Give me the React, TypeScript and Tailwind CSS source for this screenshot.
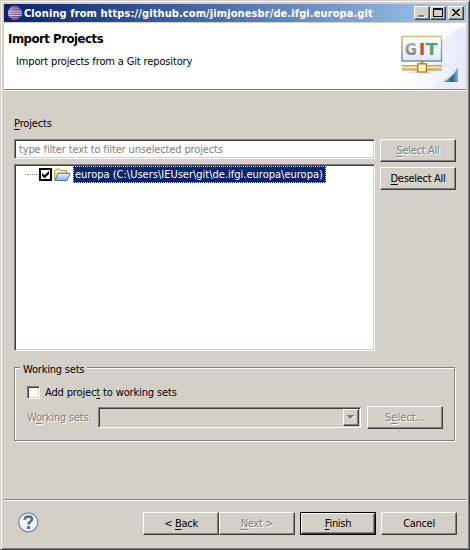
import React from "react";

const face = "bg-[#d4d0c8]";
const sunken =
  "border border-t-[#808080] border-l-[#808080] border-b-white border-r-white shadow-[inset_1px_1px_0_#404040,inset_-1px_-1px_0_#d4d0c8]";
const raised =
  "border border-t-white border-l-white border-b-[#404040] border-r-[#404040] shadow-[inset_-1px_-1px_0_#808080]";

function U({ children }: { children: React.ReactNode }) {
  return <span className="underline decoration-1 underline-offset-2">{children}</span>;
}

function Button({
  children,
  disabled,
  primary,
}: {
  children: React.ReactNode;
  disabled?: boolean;
  primary?: boolean;
}) {
  const tone = disabled ? "text-[#808080] [text-shadow:1px_1px_0_#fff]" : "text-black";
  return (
    <div className={`h-[23px] w-[76px] shrink-0 ${primary ? "border border-black" : ""}`}>
      <button className={`flex h-full w-full items-center justify-center pt-px tracking-[-0.3px] ${face} ${raised} ${tone}`}>
        <span>{children}</span>
      </button>
    </div>
  );
}

function CaptionButton({ children }: { children: React.ReactNode }) {
  return (
    <button className={`h-[14px] w-4 ${face} ${raised}`}>
      <svg width="14" height="12" viewBox="0 0 14 12" className="block" shapeRendering="crispEdges">
        {children}
      </svg>
    </button>
  );
}

function EclipseIcon() {
  return (
    <svg width="16" height="16" viewBox="0 0 16 16" className="shrink-0">
      <defs>
        <linearGradient id="globe" x1="0" y1="0" x2="1" y2="0.3">
          <stop offset="0" stopColor="#c7a3c4" />
          <stop offset="0.4" stopColor="#8c6ba6" />
          <stop offset="1" stopColor="#5c4488" />
        </linearGradient>
      </defs>
      <circle cx="8" cy="8" r="7.2" fill="url(#globe)" />
      <path d="M1.5 6.1H14.6M1 8.3H15M1.5 10.5H14.6" stroke="#dccbe6" strokeWidth="1" />
      <path d="M4 3.5H12M4.5 12.6H11.5" stroke="#b59cc9" strokeWidth=".6" />
    </svg>
  );
}

function HeaderArt() {
  return (
    <svg width="75" height="66" viewBox="391 23 75 66" className="shrink-0">
      <defs>
        <linearGradient id="swoosh" x1="391" y1="80" x2="466" y2="60" gradientUnits="userSpaceOnUse">
          <stop offset="0" stopColor="#fff" />
          <stop offset="0.5" stopColor="#f5f7fd" />
          <stop offset="1" stopColor="#e6ecfa" />
        </linearGradient>
        <linearGradient id="board" x1="0" y1="0" x2="0" y2="1">
          <stop offset="0" stopColor="#fff" />
          <stop offset="1" stopColor="#dcebf7" />
        </linearGradient>
        <linearGradient id="frame" x1="0" y1="0" x2="0" y2="1">
          <stop offset="0" stopColor="#d4b784" />
          <stop offset="1" stopColor="#5f8aa4" />
        </linearGradient>
        <linearGradient id="pipe" x1="0" y1="0" x2="0" y2="1">
          <stop offset="0" stopColor="#a8862f" />
          <stop offset="0.35" stopColor="#fff2a8" />
          <stop offset="1" stopColor="#b8973f" />
        </linearGradient>
        <linearGradient id="corner" x1="0" y1="0" x2="1" y2="0">
          <stop offset="0" stopColor="#8fb0d4" />
          <stop offset="0.6" stopColor="#2d5c99" />
          <stop offset="1" stopColor="#8eaed2" />
        </linearGradient>
        <linearGradient id="letterG" x1="0" y1="0" x2="0" y2="1">
          <stop offset="0" stopColor="#b0b0b0" />
          <stop offset="1" stopColor="#777" />
        </linearGradient>
        <linearGradient id="shade" x1="0" y1="0" x2="1" y2="0">
          <stop offset="0" stopColor="#c8c8d4" />
          <stop offset="1" stopColor="#eef2fb" />
        </linearGradient>
      </defs>
      <path d="M391 89C410 84 421 70 432 54C443 38 452 30 466 26V89Z" fill="url(#swoosh)" />
      <path d="M425 89C443 80 456 66 466 46V89Z" fill="#dfe7f8" opacity=".35" />
      <path d="M407 73L443 62L458 63L430 74Z" fill="url(#shade)" opacity=".6" />
      <rect x="402" y="36.5" width="39.5" height="24.5" fill="url(#board)" stroke="url(#frame)" strokeWidth="1.4" />
      <g fontFamily="'DejaVu Sans', sans-serif" fontWeight="bold" fontSize="16">
        <text x="404.7" y="55.3" fill="url(#letterG)" textLength="12" lengthAdjust="spacingAndGlyphs">G</text>
        <text x="418.8" y="55.3" fill="#b95350" textLength="6.5" lengthAdjust="spacingAndGlyphs">I</text>
        <text x="425.5" y="55.3" fill="#55a46a" textLength="12" lengthAdjust="spacingAndGlyphs">T</text>
      </g>
      <rect x="420.5" y="61" width="3" height="4" fill="#b28f36" />
      <rect x="402" y="65" width="40" height="5.5" fill="url(#pipe)" />
      <rect x="417.8" y="63.8" width="8.6" height="8.2" fill="#fff3c4" stroke="#a67e2a" strokeWidth="1.3" />
      <path d="M458 67V82H443C449 79 454 74 458 67Z" fill="url(#corner)" />
      <path d="M457.5 68C454 74 450 78.5 443.5 81.5" stroke="#b3c9df" fill="none" />
    </svg>
  );
}

function FolderIcon() {
  return (
    <svg width="17" height="14" viewBox="0 0 17 14" className="shrink-0">
      <defs>
        <linearGradient id="front" x1="0" y1="0" x2="0" y2="1">
          <stop offset="0" stopColor="#eaf4ff" />
          <stop offset="1" stopColor="#82b2e6" />
        </linearGradient>
      </defs>
      <path d="M.7 11.5V2.6L2 1.2H6L7.2 2.6H12.8V6" fill="#fbe7a2" stroke="#c7923f" />
      <path d="M3.9 5.3H16.2L13 12.5H.9Z" fill="url(#front)" stroke="#4879b5" strokeLinejoin="round" />
    </svg>
  );
}

export default function App() {
  return (
    <div
      className={`flex h-[550px] w-[470px] flex-col overflow-hidden ${face} border border-t-[#d4d0c8] border-l-[#d4d0c8] border-b-[#404040] border-r-[#404040] p-[3px] pb-0 font-['DejaVu_Sans_Condensed','DejaVu_Sans',sans-serif] [font-stretch:condensed] text-[11px] leading-[14px] tracking-[-0.14px] whitespace-nowrap text-black shadow-[inset_1px_1px_0_#fff,inset_-1px_-1px_0_#808080]`}
    >
      <header className="flex h-[18px] w-[462px] shrink-0 items-center bg-linear-to-r from-[#0a246a] to-[#a6caf0] pr-0.5 pl-[3px] text-white">
        <EclipseIcon />
        <h1 className="ml-px flex-1 pt-px font-bold tracking-[0.1px]">
          Cloning from https://github.com/jimjonesbr/de.ifgi.europa.git
        </h1>
        <div className="flex">
          <CaptionButton>
            <path d="M4 9H10V11H4Z" fill="#fff" />
            <path d="M3 8H9V10H3Z" fill="#808080" />
          </CaptionButton>
          <CaptionButton>
            <path d="M2 1H12V10H2ZM3 3V9H11V3Z" fill="#000" fillRule="evenodd" />
          </CaptionButton>
          <div className="ml-0.5 flex">
            <CaptionButton>
              <path
                d="M3 2H5V3H6V4H8V3H9V2H11V3H10V4H9V5H8V6H9V7H10V8H11V9H9V8H8V7H6V8H5V9H3V8H4V7H5V6H6V5H5V4H4V3H3Z"
                fill="#000"
              />
            </CaptionButton>
          </div>
        </div>
      </header>

      <section className="mt-px flex h-[67px] w-[462px] shrink-0 justify-between border-b border-[#808080] bg-white">
        <div className="pt-[8px] pl-1">
          <h2 className="text-[13px] leading-4 font-bold tracking-[-0.47px]">Import Projects</h2>
          <p className="mt-[8px] ml-2">Import projects from a Git repository</p>
        </div>
        <HeaderArt />
      </section>

      <main className="flex w-[462px] flex-1 flex-col border-t border-white pl-[10px]">
        <label className="mt-[26px] block h-[14px]">
          <U>P</U>rojects
        </label>
        <div className="mt-[8px] flex gap-[5px]">
          <div className="flex w-[361px] flex-col gap-[5px]">
            <div className={`h-5 bg-white pt-[3px] pl-[4px] text-[#808080] ${sunken}`}>
              <span>type filter text to filter unselected projects</span>
            </div>
            <div className={`h-[187px] bg-white pt-px pl-3 ${sunken}`}>
              <div className="flex h-[17px] items-center">
                <span className="w-3 border-t border-dotted border-[#808080]" />
                <span className="flex size-[13px] items-center justify-center border-2 border-black bg-white">
                  <svg width="9" height="9" viewBox="0 0 9 9">
                    <path d="M1 3V6L3.5 8.3L8 4V1L3.5 5.3Z" fill="#000" />
                  </svg>
                </span>
                <span className="ml-[2px] flex">
                  <FolderIcon />
                </span>
                <span className="ml-[2px] h-[17px] w-[253px] border border-dotted border-[#f5db95] bg-[#0a246a] pl-px leading-[16px] tracking-[0px] text-white">
                  europa (C:\Users\IEUser\git\de.ifgi.europa\europa)
                </span>
              </div>
            </div>
          </div>
          <div className="flex flex-col gap-[5px]">
            <Button disabled>
              <U>S</U>elect All
            </Button>
            <Button>
              <U>D</U>eselect All
            </Button>
          </div>
        </div>

        <div
          role="group"
          className="relative mt-4 h-[74px] w-[441px] border border-[#808080] px-3 pt-[18px] shadow-[1px_1px_0_#fff,inset_1px_1px_0_#fff]"
        >
          <span className={`absolute -top-[5px] left-[5px] px-[3px] tracking-[-0.2px] ${face}`}>Working sets</span>
          <label className="flex h-[14px] items-start gap-[5px]">
            <span className={`size-[13px] bg-white ${sunken}`} />
            <span>
              Add projec<U>t</U> to working sets
            </span>
          </label>
          <div className="mt-[6px] flex items-center">
            <span className="w-[71px] shrink-0 pt-px tracking-[-0.2px] text-[#808080] [text-shadow:1px_1px_0_#fff]">
              W<U>o</U>rking sets:
            </span>
            <div className={`flex h-[21px] w-[263px] shrink-0 justify-end p-px ${sunken}`}>
              <div className={`flex h-[17px] w-4 items-center justify-center ${raised}`}>
                <svg width="8" height="5" viewBox="0 0 8 5" shapeRendering="crispEdges">
                  <path d="M1 1H8L4.5 5Z" fill="#fff" />
                  <path d="M0 0H7L3.5 4Z" fill="#808080" />
                </svg>
              </div>
            </div>
            <div className="ml-[6px]">
              <Button disabled>
                <span className="tracking-[0px]">
                  S<U>e</U>lect...
                </span>
              </Button>
            </div>
          </div>
        </div>
      </main>

      <footer className="flex h-[50px] w-[462px] shrink-0 items-start border-t border-[#808080] pr-[9px] pl-[14px] shadow-[inset_0_1px_0_#fff]">
        <svg width="21" height="21" viewBox="0 0 21 21" className="mt-[12px]">
          <circle cx="10.3" cy="10.3" r="9.5" fill="#f1f4f9" stroke="#7185a5" strokeWidth="1.2" />
          <path
            d="M6.7 7.8C6.8 5.3 8.3 4.4 10.4 4.4C12.6 4.4 14 5.5 14 7.3C14 9.8 10.5 9.8 10.5 12.6"
            fill="none"
            stroke="#52698f"
            strokeWidth="2.5"
          />
          <rect x="9.1" y="14.1" width="2.9" height="2.8" rx=".5" fill="#52698f" />
        </svg>
        <div className="mt-[12px] ml-auto flex gap-[5px]">
          <div className="flex">
            <Button>
              &lt; <U>B</U>ack
            </Button>
            <Button disabled>
              <U>N</U>ext &gt;
            </Button>
          </div>
          <Button primary>
            <U>F</U>inish
          </Button>
          <Button>Cancel</Button>
        </div>
      </footer>
    </div>
  );
}
